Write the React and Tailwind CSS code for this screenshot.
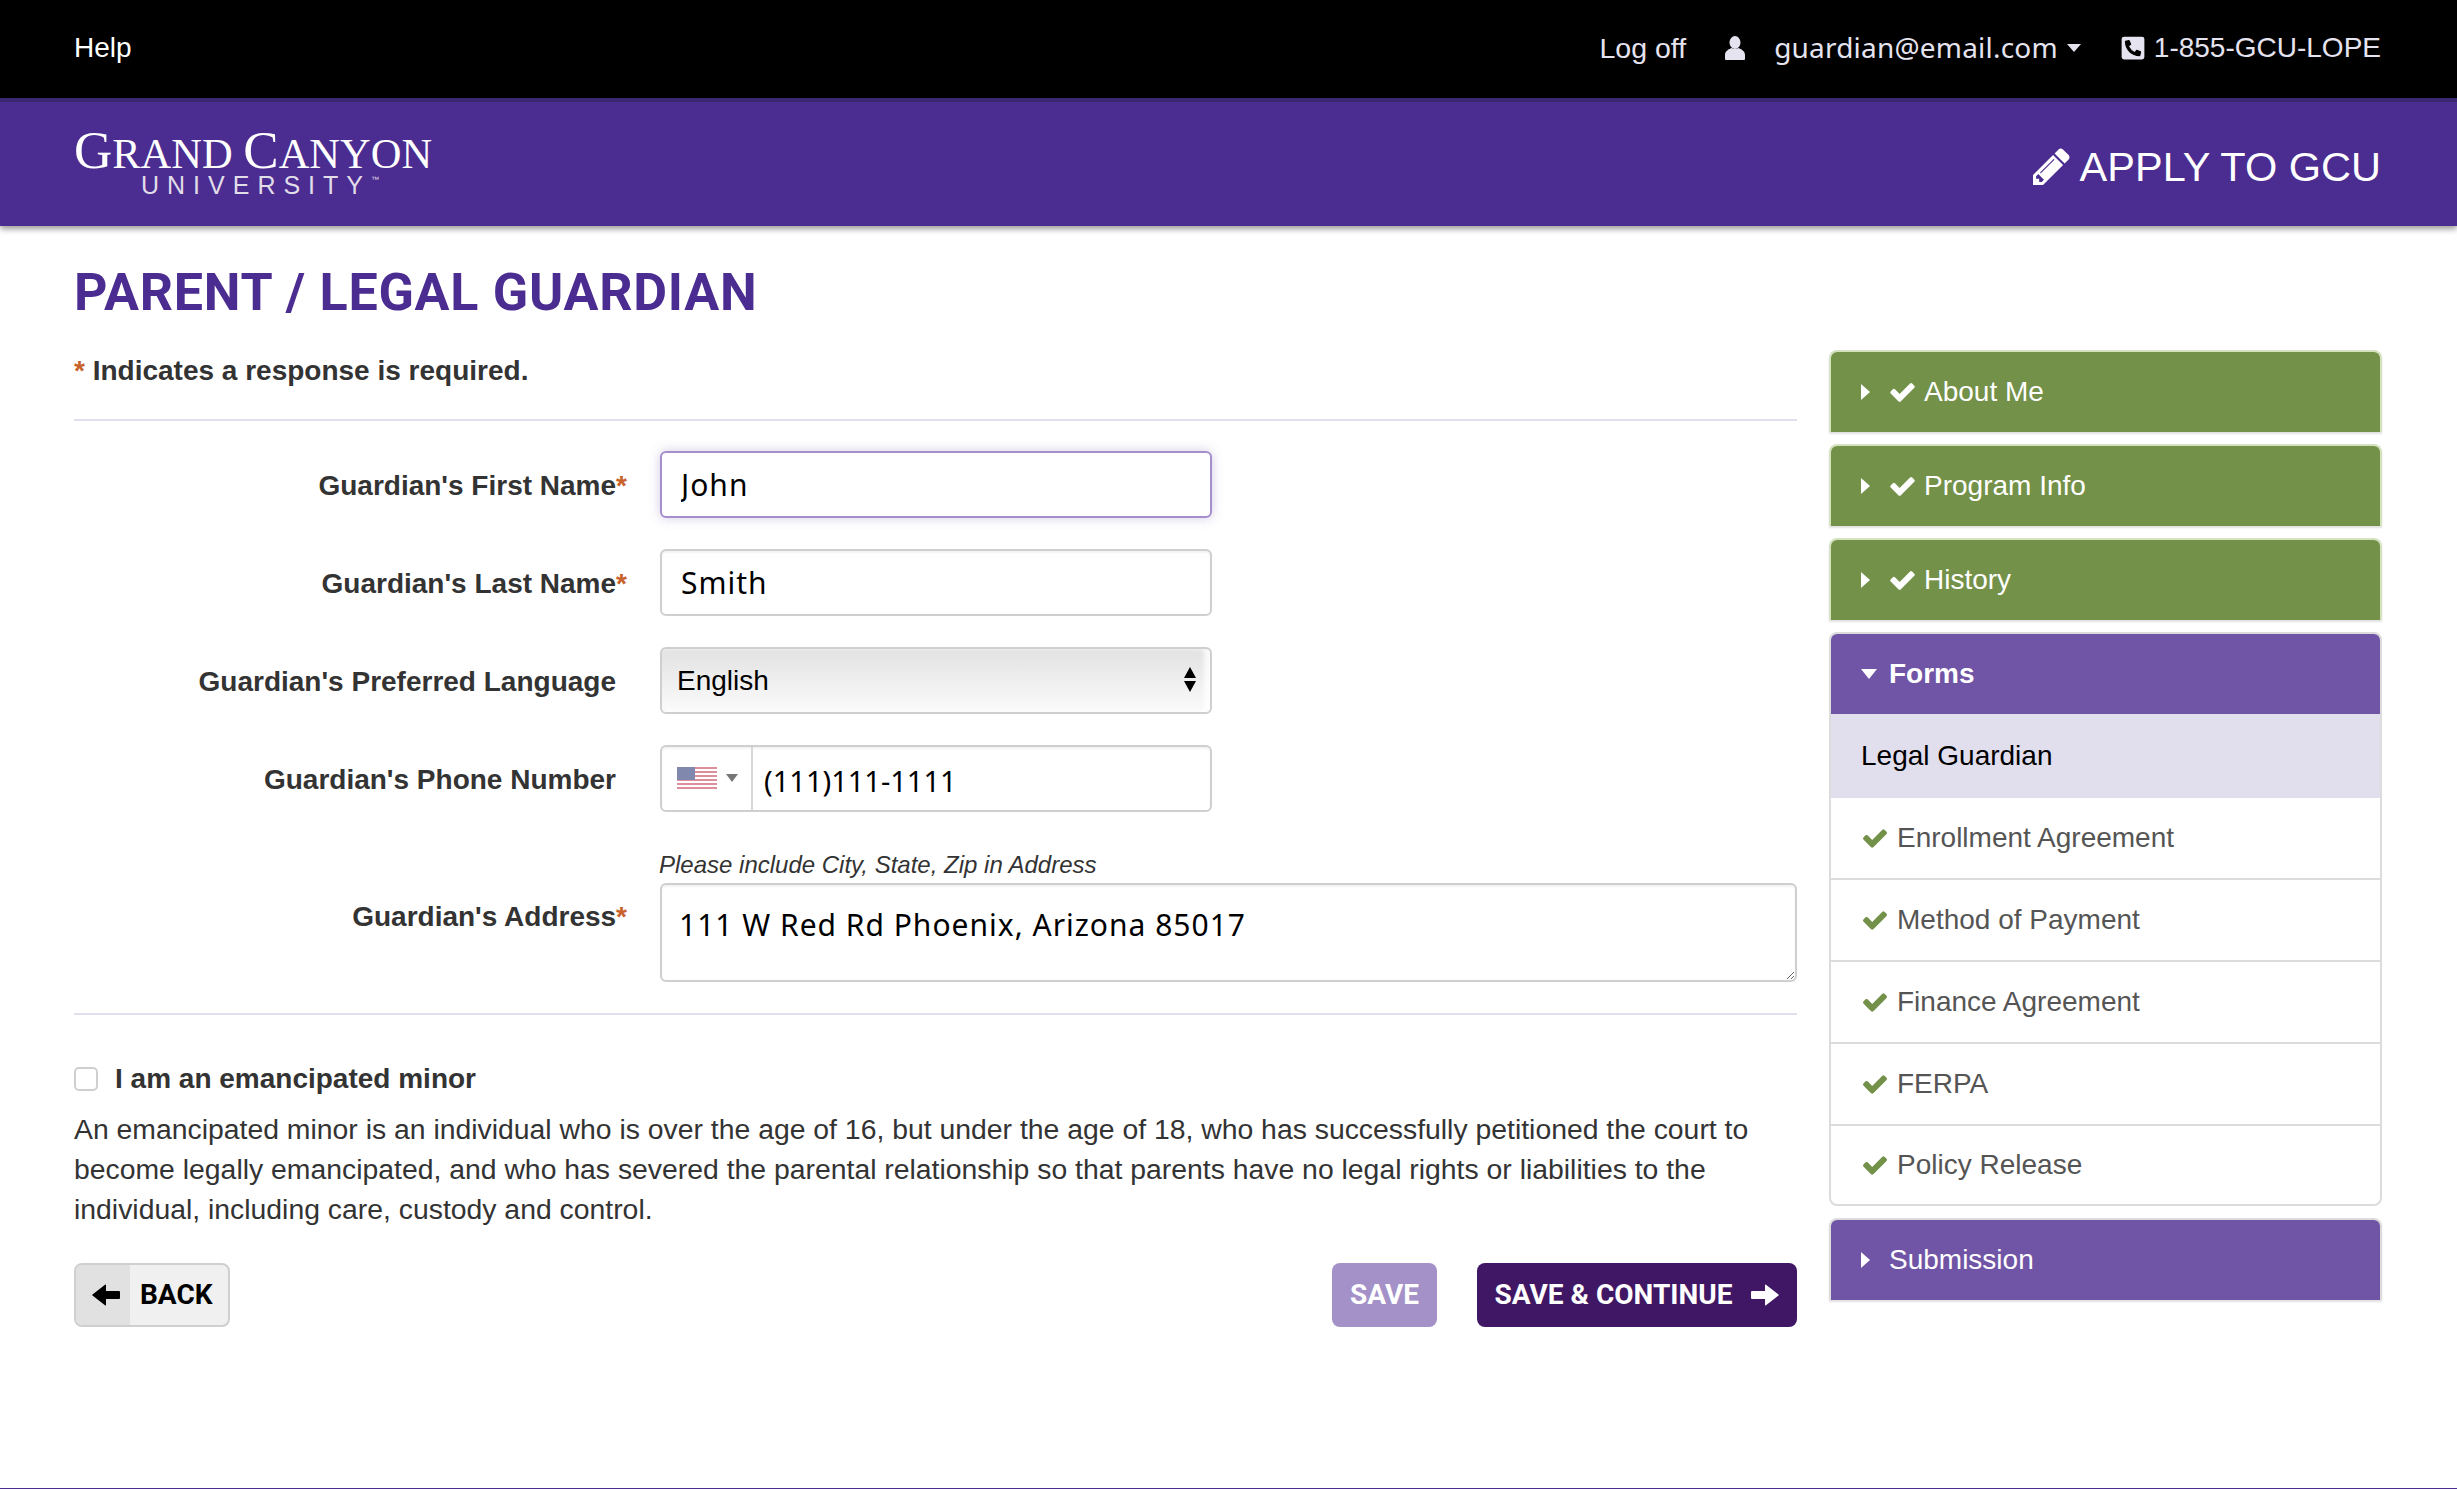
import { FaPhoneSquareAlt } from 'react-icons/fa';

const completedSections = ['About Me', 'Program Info', 'History'];
const formItems = ['Enrollment Agreement', 'Method of Payment', 'Finance Agreement', 'FERPA', 'Policy Release'];

function Star() {
    return <span className="text-[#c8622a]">*</span>;
}

function CheckIcon({ className }) {
    return (
        <svg viewBox="121 330 1550 1200" fill="currentColor" className={className}>
            <path d="M1671 566q0 40-28 68l-724 724-136 136q-28 28-68 28t-68-28l-136-136-362-362q-28-28-28-68t28-68l136-136q28-28 68-28t68 28l294 295 656-657q28-28 68-28t68 28l136 136q28 28 28 68z" />
        </svg>
    );
}

function PencilIcon({ className }) {
    return (
        <svg viewBox="128 128 1536 1536" fill="currentColor" className={className}>
            <path d="M491 1536l91-91-235-235-91 91v107h128v128h107zm523-928q0-22-22-22-10 0-17 7l-542 542q-7 7-7 17 0 22 22 22 10 0 17-7l542-542q7-7 7-17zm-54-192l416 416-832 832h-416v-416zm683 96q0 53-37 90l-166 166-416-416 166-165q36-38 90-38 53 0 91 38l235 234q37 39 37 91z" />
        </svg>
    );
}

function UserIcon({ className }) {
    return (
        <svg viewBox="0 0 20 24" fill="currentColor" className={className}>
            <ellipse cx="10" cy="6.5" rx="5.5" ry="6.5" />
            <path d="M1 24q-1 0-1-1v-4c0-4 4-6 6.5-7q3.5 2 7 0c2.5 1 6.5 3 6.5 7v4q0 1-1 1z" />
        </svg>
    );
}

// square-headed arrow, pointing right; flipped for BACK
function ArrowIcon({ className }) {
    return (
        <svg viewBox="0 0 28 22" fill="currentColor" className={className}>
            <path d="M1 7h13V1q0-1 1-.2L27.5 10.500q.7.5 0 1L15 21.200q-1 .8-1-.2v-6H1q-1 0-1-1V8q0-1 1-1z" />
        </svg>
    );
}

function CaretRight() {
    return <div className="w-0 h-0 flex-none border-y-[8px] border-y-transparent border-l-[9px] border-l-white" />;
}

function CaretDown({ className }) {
    return <div className={`w-0 h-0 flex-none border-x-[7px] border-x-transparent border-t-[8px] ${className}`} />;
}

function UsFlag() {
    return (
        <svg viewBox="0 0 40 24" className="w-10 h-6 flex-none opacity-60">
            <rect width="40" height="24" fill="#fff" />
            {[0, 4, 8, 12, 16, 20].map((y) => (
                <rect key={y} y={y} width="40" height="2" fill="#c8485a" />
            ))}
            <rect width="18" height="13" fill="#2f3a7a" />
        </svg>
    );
}

function Field({ label, required, children }) {
    return (
        <div className="flex items-center">
            <label className={`w-[553px] flex-none text-right font-bold text-[#333] pt-[2px] ${required ? '' : 'pr-[11px]'}`}>
                {label}
                {required && <Star />}
            </label>
            <div className="ml-[33px] w-[552px]">{children}</div>
        </div>
    );
}

function TextInput({ value, focused }) {
    return (
        <input
            readOnly
            defaultValue={value}
            className={`w-full h-[67px] px-[19px] rounded-[6px] bg-white text-black text-[30px] font-['Noto_Sans',sans-serif] tracking-[1px] outline-none ${
                focused
                    ? 'border-2 border-[#a48fcb] shadow-[0_0_12px_rgba(112,84,166,0.3)]'
                    : 'border-2 border-[#cfcfcf] shadow-[inset_0_2px_2px_rgba(0,0,0,0.05)]'
            }`}
        />
    );
}

function SectionHeader({ label, done, open, purple }) {
    return (
        <div
            className={`h-[80px] flex items-center pl-[30px] text-white rounded-t-[6px] ${purple ? 'bg-[#7054a6]' : 'bg-[#739148]'} ${open ? 'font-bold' : ''}`}
        >
            {open ? <CaretDown className="border-t-white border-x-[8px] border-t-[10px]" /> : <CaretRight />}
            {done && <CheckIcon className="w-[25px] h-[19px] ml-[20px] mr-[9px] flex-none" />}
            <span className={done ? '' : open ? 'ml-[12px]' : 'ml-[19px]'}>{label}</span>
        </div>
    );
}

function Sidebar() {
    return (
        <aside className="w-[553px] flex-none flex flex-col gap-[12px] -mt-px">
            {completedSections.map((s) => (
                <div key={s} className="border-2 border-b-0 border-[#d5e2c0] rounded-t-[8px] shadow-[0_2px_2px_rgba(0,0,0,0.12)]">
                    <SectionHeader label={s} done />
                </div>
            ))}
            <div className="border-2 border-[#dcdcdc] rounded-[8px]">
                <SectionHeader label="Forms" open purple />
                <div className="h-[84px] flex items-center pl-[30px] bg-[#e1dfed] text-black">Legal Guardian</div>
                {formItems.map((item, i) => (
                    <div
                        key={item}
                        className={`flex items-center pl-[32px] text-[#555] ${i < formItems.length - 1 ? 'h-[82px] border-b-2 border-[#dcdcdc]' : 'h-[78px]'}`}
                    >
                        <CheckIcon className="w-[24px] h-[19px] mr-[10px] flex-none text-[#739148]" />
                        {item}
                    </div>
                ))}
            </div>
            <div className="border-2 border-b-0 border-[#dcdcdc] rounded-t-[8px] shadow-[0_2px_2px_rgba(0,0,0,0.12)]">
                <SectionHeader label="Submission" purple />
            </div>
        </aside>
    );
}

export default function App() {
    return (
        <div className="h-[1489px] overflow-hidden flex flex-col bg-white font-['Liberation_Sans',sans-serif] text-[28px] leading-[40px] text-[#333] border-b border-[#4b2c91]">
            <div className="h-[98px] flex-none bg-black flex items-center justify-between pl-[74px] pr-[76px] pb-[3px] text-[#e6e3f0]">
                <span className="text-white">Help</span>
                <div className="flex items-center">
                    <span className="text-[28.500px]">Log off</span>
                    <UserIcon className="w-[20px] h-[24px] ml-[39px] mr-[29px]" />
                    <span className="font-['Noto_Sans',sans-serif] tracking-[0.2px] -mt-[2px]">guardian@email.com</span>
                    <CaretDown className="border-t-[#e6e3f0] ml-[9px] mr-[40px]" />
                    <FaPhoneSquareAlt className="w-[24px] h-[26px] mr-[9px]" />
                    <span>1-855-GCU-LOPE</span>
                </div>
            </div>

            <header className="h-[128px] flex-none bg-[#4b2c91] border-t-4 border-[#3b2670] flex items-center justify-between pl-[74px] pr-[76px] text-white shadow-[0_3px_6px_rgba(0,0,0,0.4)] relative">
                <div className="flex flex-col items-center w-[358px] -mt-[6px]">
                    <div className="font-['Liberation_Serif',serif] text-[42.500px] leading-[44px] whitespace-nowrap">
                        <span className="text-[53px]">G</span>RAND <span className="text-[53px]">C</span>ANYON
                    </div>
                    <div className="text-[25px] leading-[18px] tracking-[8px] pl-[6px] font-light whitespace-nowrap text-[#e1dde9]">
                        UNIVERSITY<span className="absolute text-[8px] leading-[8px] tracking-normal">™</span>
                    </div>
                </div>
                <div className="flex items-center text-[41.500px] leading-[50px] pt-[5px]">
                    <PencilIcon className="w-[37px] h-[37px] mr-[10px]" />
                    APPLY TO GCU
                </div>
            </header>

            <main className="flex-1 pl-[74px] pr-[75px] pt-[39px]">
                <h1 className="font-['Roboto',sans-serif] font-bold text-[52px] leading-[56px] tracking-[0.75px] text-[#4b2c91] mb-[30px]">PARENT / LEGAL GUARDIAN</h1>
                <div className="flex gap-[32px]">
                    <div className="w-[1723px] flex-none">
                        <p className="font-bold">
                            <Star /> Indicates a response is required.
                        </p>
                        <div className="h-[2px] bg-[#e1dfed] mt-[28px] mb-[30px]" />

                        <div className="flex flex-col gap-[31px]">
                            <Field label="Guardian's First Name" required>
                                <TextInput value="John" focused />
                            </Field>
                            <Field label="Guardian's Last Name" required>
                                <TextInput value="Smith" />
                            </Field>
                            <Field label="Guardian's Preferred Language">
                                <div className="relative">
                                    <select className="w-full h-[67px] pl-[15px] rounded-[6px] border-2 border-[#cfcfcf] appearance-none bg-gradient-to-b from-[#e2e2e2] to-[#fbfbfb] text-black outline-none shadow-[inset_-6px_0_4px_rgba(255,255,255,0.8)]">
                                        <option>English</option>
                                    </select>
                                    <div className="absolute right-[16px] top-[20px] flex flex-col items-center gap-[3px]">
                                        <div className="w-0 h-0 border-x-[6px] border-x-transparent border-b-[11px] border-b-black" />
                                        <div className="w-0 h-0 border-x-[6px] border-x-transparent border-t-[11px] border-t-black" />
                                    </div>
                                </div>
                            </Field>
                            <Field label="Guardian's Phone Number">
                                <div className="h-[67px] flex rounded-[6px] border-2 border-[#cfcfcf] shadow-[inset_0_2px_2px_rgba(0,0,0,0.05)]">
                                    <div className="w-[91px] flex-none flex items-center pl-[15px] border-r-2 border-[#d8d8d8]">
                                        <UsFlag />
                                        <div className="ml-[9px] -mt-[2px] w-0 h-0 border-x-[6px] border-x-transparent border-t-[8px] border-t-[#777]" />
                                    </div>
                                    <input readOnly defaultValue="(111)111-1111" className="flex-1 min-w-0 pl-[11px] pt-[5px] bg-transparent text-black text-[29px] font-['Noto_Sans',sans-serif] outline-none" />
                                </div>
                            </Field>
                        </div>

                        <p className="ml-[585px] mt-[38px] mb-[3px] text-[24px] leading-[30px] italic">Please include City, State, Zip in Address</p>
                        <div className="flex items-start">
                            <label className="w-[553px] flex-none text-right font-bold mt-[14px]">
                                Guardian's Address
                                <Star />
                            </label>
                            <textarea
                                readOnly
                                defaultValue="111 W Red Rd Phoenix, Arizona 85017"
                                className="ml-[33px] flex-1 min-w-0 h-[99px] px-[17px] pt-[20px] rounded-[6px] border-2 border-[#cfcfcf] text-black text-[30px] font-['Noto_Sans',sans-serif] tracking-[1px] outline-none shadow-[inset_0_2px_2px_rgba(0,0,0,0.05)]"
                            />
                        </div>
                        <div className="h-[2px] bg-[#e1dfed] mt-[31px]" />

                        <label className="flex items-center mt-[44px] font-bold">
                            <input type="checkbox" className="w-6 h-6 appearance-none rounded-[5px] border-2 border-[#cfcfcf] bg-white mr-[17px]" />
                            I am an emancipated minor
                        </label>
                        <p className="mt-[10px] text-[28.370px]">
                            An emancipated minor is an individual who is over the age of 16, but under the age of 18, who has successfully petitioned the court to become legally emancipated, and who has severed the parental relationship so that parents have no legal rights or liabilities to the individual, including care, custody and control.
                        </p>

                        <div className="flex items-center mt-[34px] font-['Roboto',sans-serif] font-bold">
                            <button className="w-[156px] h-[64px] flex items-stretch rounded-[8px] border-2 border-[#cfcfcf] bg-[#f0f0f0] text-black overflow-hidden">
                                <span className="w-[54px] flex-none flex items-center justify-center pl-[6px] bg-[#e1e1e1]">
                                    <ArrowIcon className="w-[28px] h-[22px] flex-none rotate-180" />
                                </span>
                                <span className="flex items-center pl-[10px]">BACK</span>
                            </button>
                            <button className="ml-auto w-[105px] h-[64px] rounded-[8px] bg-[#a391c8] text-white">SAVE</button>
                            <button className="ml-[40px] w-[320px] h-[64px] flex items-center justify-center rounded-[8px] bg-[#3f1764] text-white">
                                SAVE &amp; CONTINUE
                                <ArrowIcon className="w-[28px] h-[22px] ml-[19px]" />
                            </button>
                        </div>
                    </div>
                    <Sidebar />
                </div>
            </main>
        </div>
    );
}
